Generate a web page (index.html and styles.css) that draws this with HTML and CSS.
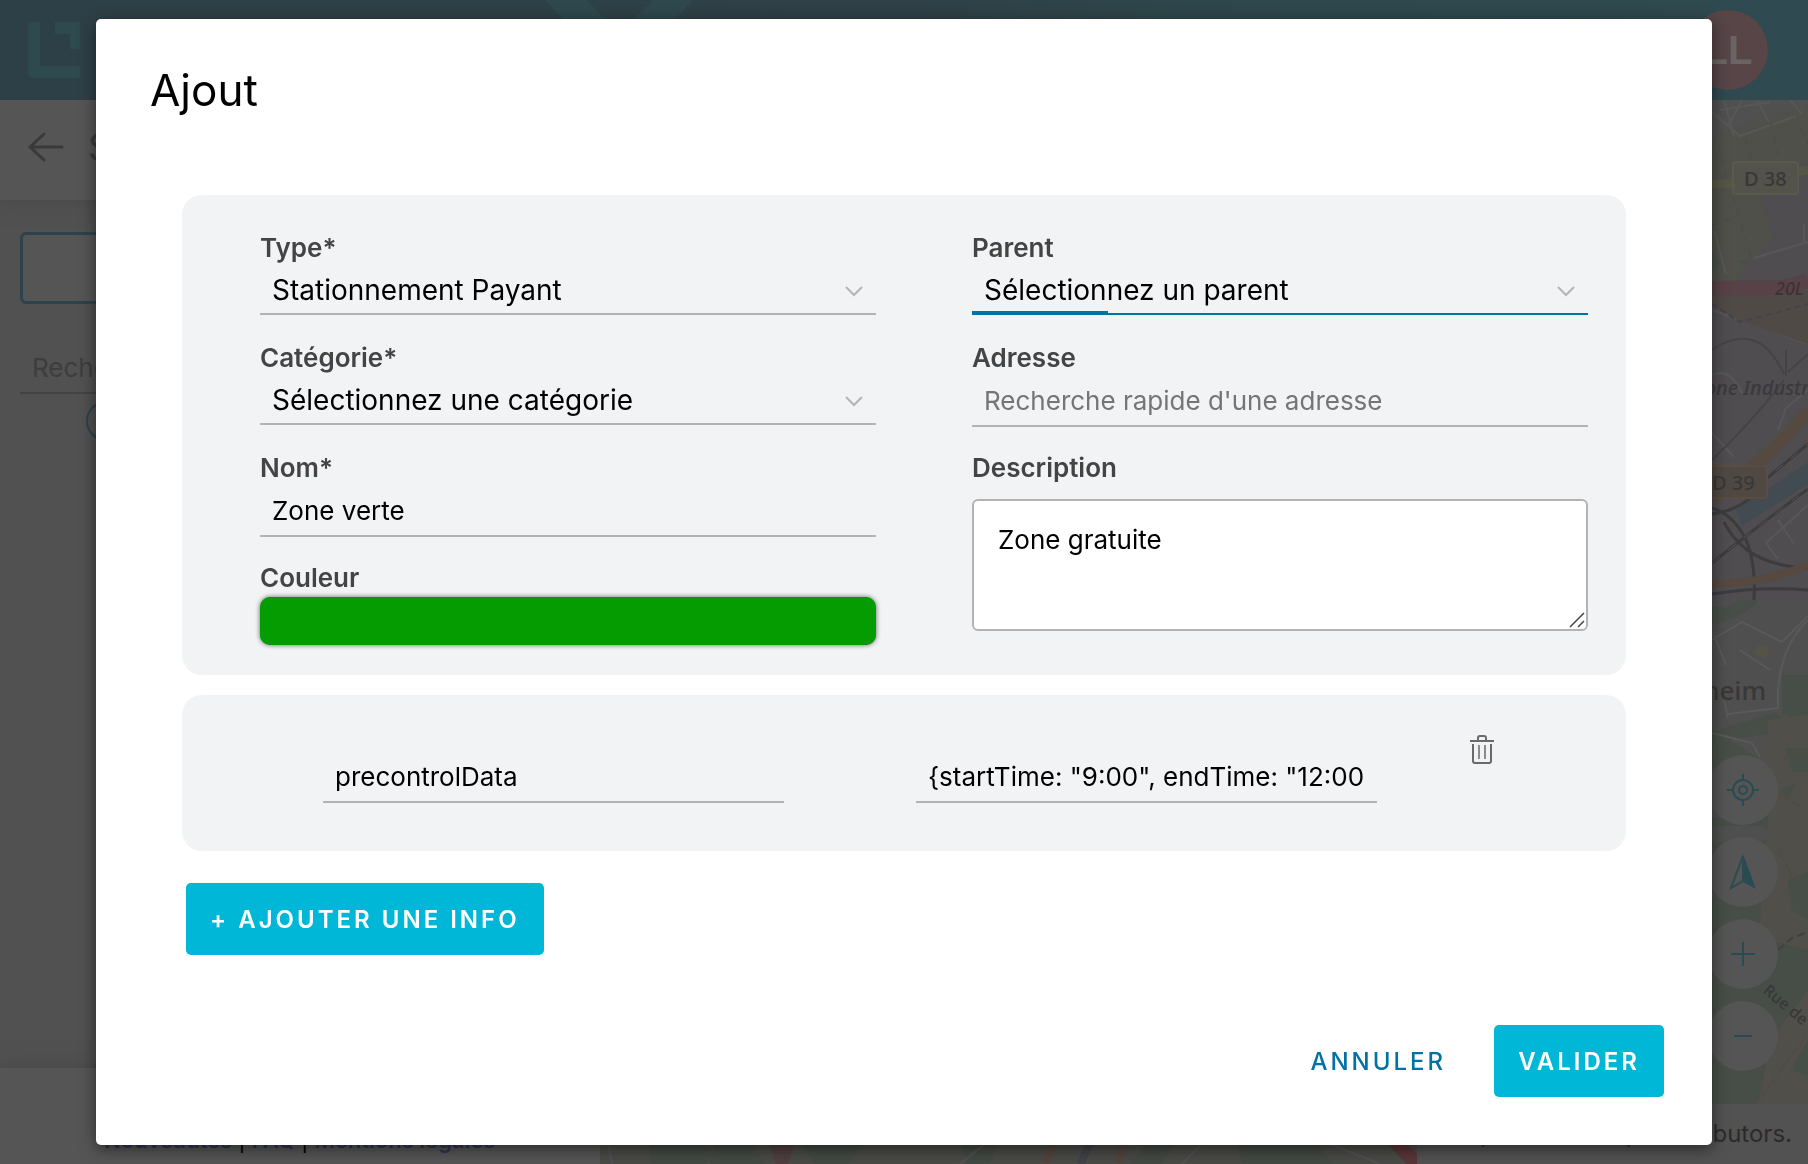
FILE: index.html
```html
<!DOCTYPE html>
<html lang="fr">
<head>
<meta charset="utf-8">
<title>Ajout</title>
<link rel="stylesheet" href="styles.css">
</head>
<body>
<div class="app">
  <header class="topbar">
    <svg class="logo" width="52" height="56" viewBox="0 0 52 56" aria-hidden="true"><path d="M0 0h12v44h40v12H6q-6 0-6-6zM27 0h25v27h-10V12H27z" fill="#2e4a4f"/></svg>
    <svg class="chevron" width="148" height="100" viewBox="0 0 148 100" aria-hidden="true"><path d="M0 0h42l32 34L108 0h40L74 78z" fill="#2e484d"/></svg>
    <div class="avatar">LL</div>
  </header>
  <div class="workspace">
    <aside class="sidebar">
      <div class="side-head">
        <svg width="36" height="30" viewBox="0 0 36 30" fill="none" stroke="#3a3a3a" stroke-width="3" stroke-linecap="round" stroke-linejoin="round" aria-hidden="true"><path d="M34 15H2M16 2L2 15l14 13"/></svg>
        <span>Secteurs</span>
      </div>
      <div class="side-body">
        <div class="side-box"></div>
        <div class="side-search">Recherche</div>
        <div class="side-chip"></div>
      </div>
      <footer class="side-foot"><a href="#">Nouveautés</a> | <a href="#">FAQ</a> | <a href="#">Mentions légales</a></footer>
    </aside>
    <div class="map">
      <svg class="tiles" viewBox="600 100 1208 1064" preserveAspectRatio="xMaxYMin slice" aria-hidden="true">
        <rect x="600" y="100" width="1208" height="1064" fill="#4f4d50"/>
        <rect x="1600" y="100" width="208" height="50" fill="#505050"/>
        <path d="M1700 141l50-19 58-14v52l-40 16-8 18 12 44-30 30-6 14h-36z" fill="#50504a"/>
        <path d="M1712 250l8 14-8 8zM1738 260l10 0-4 6z" fill="#465047"/>
        <g fill="none" stroke="#575757" stroke-width="2">
          <path d="M1712 112l28 24 56-20M1724 100l10 36M1742 100l-14 26M1757 100l12 22M1790 100l12 14M1720 110l50-8"/>
          <path d="M1714 230l12 44M1754 258l54-16M1804 242v-18M1712 310l96 34M1712 375q18-8 30 18M1712 433l22 24M1808 505l-42 38 12 16M1778 430l8-22 22-18M1778 520l16 24"/>
        </g>
        <g fill="none" stroke="#524541" stroke-width="1" stroke-dasharray="6 8"><path d="M1718 145l9 35M1746 140l6 22M1771 122l8 38M1800 128l8 16M1733 197l18 60M1712 225l24-8"/></g>
        <path d="M1700 184h40l68-14" fill="none" stroke="#565546" stroke-width="9"/>
        <path d="M1700 298l108-8v54l-66-22z" fill="#504a47"/>
        <path d="M1712 304l28 18 68-18" fill="none" stroke="#45424a" stroke-width="2" stroke-dasharray="6 4"/>
        <path d="M1700 288h70q22-1 38-8" fill="none" stroke="#574247" stroke-width="15"/>
        <path d="M1712 350q22-15 40-10t32 34M1788 372l20-18M1784 380q-30 40-72 80M1786 350v26" fill="none" stroke="#444446" stroke-width="2"/>
        <path d="M1712 500q50-36 96-88" fill="none" stroke="#56493f" stroke-width="12"/>
        <path d="M1736 510l72-48v22l-66 42z" fill="#434b52"/>
        <g fill="none" stroke="#3c3c3c" stroke-width="3">
          <path d="M1760 484l48-40M1712 563q50-40 96-74M1712 508q20 6 32 28t10 64M1712 514q30-4 46-24M1724 522q22 44 84 46"/>
          <path d="M1712 594q50-8 96-4"/>
        </g>
        <path d="M1700 584q70 0 108-20" fill="none" stroke="#56493f" stroke-width="8"/>
        <path d="M1760 484l48-40M1712 563q50-40 96-74" fill="none" stroke="#555" stroke-width="1" stroke-dasharray="10 10"/>
        <rect x="1600" y="600" width="208" height="220" fill="#4f4f4f"/>
        <path d="M1712 606l14 2 14-8h18q-12 18-46 24zM1782 675h26v50l-26-12zM1712 732l64-20 14 18-60 10 28 18-46 10z" fill="#474e47"/>
        <path d="M1768 720l40-6v120h-60l20-50z" fill="#504f49"/>
        <path d="M1758 644l12 4-4 10-12-4z" fill="#535346"/>
        <path d="M1712 640l30-18 40 20 26-26M1714 635l12 30M1740 650l30 20M1808 620q-32 30-30 88l-50 6M1712 733l40 10 8 14M1724 700l4 18" fill="none" stroke="#595959" stroke-width="2"/>
        <path d="M1600 826l148-10 60-20v368h-208z" fill="#474e47"/>
        <path d="M1770 790l38-4v164l-32-8-30 40-10-20 24-40zM1770 1040l38-50v50l-20 36-28 20zM1764 1090l20-22 24 8v28h-52z" fill="#504f49"/>
        <path d="M1712 826h50l10 6-10 10h-50z" fill="#4f4f4f"/>
        <path d="M1786 748h22v24h-16zM1788 880l20-8v48l-16-10zM1780 790l16-6-8 14z" fill="#474e47"/>
        <path d="M1756 1104l50-68M1776 792l24 14M1778 850l16 30M1782 760l26-10" fill="none" stroke="#54493f" stroke-width="1"/>
        <path d="M1778 950l14-12 16-6" fill="none" stroke="#404040" stroke-width="2" stroke-dasharray="8 4"/>
        <g>
          <path d="M600 1140h820v24H600z" fill="#4a4a47"/>
          <path d="M650 1140h50l14 12-8 12h-56zM716 1140h34l14 24h-54zM800 1140h64l-16 24h-34zM962 1140h36l-8 24h-24zM1150 1140h26l-14 24h-32zM1236 1140h80l16 24h-90z" fill="#434943"/>
          <path d="M768 1140h28l-8 24h-12z" fill="#503f40"/>
          <path d="M1056 1140l-12 24M1124 1140l-6 24" stroke="#51463d" stroke-width="9"/>
          <path d="M1092 1140l-12 24" stroke="#3f4249" stroke-width="8"/>
          <path d="M608 1140l4 24M960 1164l30-24M1182 1164l24-24M1320 1140l60 24" stroke="#525055" stroke-width="2"/>
          <path d="M1386 1132l34 36" stroke="#593538" stroke-width="14"/>
        </g>
        <rect x="1733" y="162" width="65" height="32" rx="3" fill="#53524b" stroke="#5a594e" stroke-width="2"/>
        <rect x="1700" y="466" width="67" height="32" rx="3" fill="#504842" stroke="#574d44" stroke-width="2"/>
        <g font-family="Noto Sans, sans-serif" font-weight="500" fill="#383838">
          <text x="1744" y="186" font-size="20">D 38</text>
          <text x="1712" y="490" font-size="20">D 39</text>
          <text x="1775" y="295" font-size="18" font-style="italic" fill="#3f3236">20L</text>
          <text x="1694" y="395" font-size="20" font-style="italic" fill="#3b393d">Zone Industrielle</text>
          <text x="1766" y="700" font-size="26" text-anchor="end">Eckbolsheim</text>
          <text x="1762" y="992" font-size="16" transform="rotate(40 1762 992)">Rue de</text>
        </g>
      </svg>
      <div class="map-tools">
        <button type="button" aria-label="Me localiser"><svg width="32" height="32" viewBox="0 0 32 32" fill="none" stroke="#2b4b52" stroke-width="2"><circle cx="16" cy="16" r="10"/><circle cx="16" cy="16" r="4"/><path d="M16 0v6M16 26v6M0 16h6M26 16h6"/></svg></button>
        <button type="button" aria-label="Nord"><svg width="28" height="36" viewBox="0 0 28 36"><path d="M14 2L2 34l12-7z" fill="none" stroke="#2b4b52" stroke-width="2"/><path d="M14 0l13 35-13-7z" fill="#2b4b52"/></svg></button>
        <button type="button" aria-label="Zoom avant"><svg width="26" height="26" viewBox="0 0 26 26" stroke="#2b4b52" stroke-width="2"><path d="M13 1v24M1 13h24"/></svg></button>
        <button type="button" aria-label="Zoom arrière"><svg width="26" height="26" viewBox="0 0 26 26" stroke="#2b4b52" stroke-width="2"><path d="M4 13h18"/></svg></button>
      </div>
      <div class="attribution">© OpenStreetMap contributors.</div>
    </div>
  </div>
</div>

<div class="overlay">
  <form class="dialog" role="dialog" aria-labelledby="dialog-title">
    <h1 id="dialog-title">Ajout</h1>
    <div class="content">
      <section class="panel fields">
        <div class="field">
          <label for="type">Type*</label>
          <div class="select">
            <select id="type"><option>Stationnement Payant</option></select>
            <svg width="18" height="12" viewBox="0 0 18 12"><path d="M1 1l8 8 8-8"/></svg>
          </div>
        </div>
        <div class="field">
          <label for="parent">Parent</label>
          <div class="select active">
            <select id="parent"><option>Sélectionnez un parent</option></select>
            <svg width="18" height="12" viewBox="0 0 18 12"><path d="M1 1l8 8 8-8"/></svg>
          </div>
        </div>
        <div class="field">
          <label for="categorie">Catégorie*</label>
          <div class="select">
            <select id="categorie"><option>Sélectionnez une catégorie</option></select>
            <svg width="18" height="12" viewBox="0 0 18 12"><path d="M1 1l8 8 8-8"/></svg>
          </div>
        </div>
        <div class="field">
          <label for="adresse">Adresse</label>
          <input class="line-input" id="adresse" type="text" placeholder="Recherche rapide d'une adresse">
        </div>
        <div class="field">
          <label for="nom">Nom*</label>
          <input class="line-input" id="nom" type="text" value="Zone verte">
        </div>
        <div class="field tall">
          <label for="description">Description</label>
          <div class="area">
            <textarea id="description">Zone gratuite</textarea>
            <svg width="16" height="16" viewBox="0 0 16 16" aria-hidden="true"><path d="M1 15L15 1M9 15l6-6"/></svg>
          </div>
        </div>
        <div class="field">
          <label for="couleur">Couleur</label>
          <input class="swatch" id="couleur" type="color" value="#049c00">
        </div>
      </section>
      <section class="panel info">
        <input class="line-input" type="text" aria-label="Nom de l'info" value="precontrolData">
        <input class="line-input" type="text" aria-label="Valeur de l'info" value='{startTime: "9:00", endTime: "12:00'>
        <button class="trash" type="button" aria-label="Supprimer">
          <svg width="24" height="30" viewBox="0 0 24 30" fill="none" stroke="#6a6a6a" stroke-width="2"><path d="M0 6h24"/><path d="M8 5V3q0-2 2-2h4q2 0 2 2v2M3 9v17q0 2 2 2h14q2 0 2-2V9"/><path d="M9 10v14M15 10v14" stroke-width="1.5"/></svg>
        </button>
      </section>
      <button class="btn primary add" type="button">+ AJOUTER UNE INFO</button>
    </div>
    <div class="actions">
      <button class="btn flat" type="button">ANNULER</button>
      <button class="btn primary" type="submit">VALIDER</button>
    </div>
  </form>
</div>
</body>
</html>
```
FILE: styles.css
```css
* { box-sizing: border-box; }

body {
  margin: 0;
  font-family: Inter, "Liberation Sans", sans-serif;
  font-size: 26px;
  color: #000;
}

button, input, select, textarea { font: inherit; color: inherit; }

/* Dimmed application behind the dialog */
.app {
  display: flex;
  flex-direction: column;
  height: 100vh;
  overflow: hidden;
}

.topbar {
  position: relative;
  display: flex;
  align-items: center;
  justify-content: space-between;
  flex: none;
  height: 100px;
  padding: 0 40px 0 28px;
  background: linear-gradient(90deg, #2e4047 0%, #2f4047 50%, #2e474c 66%, #2f4a50 100%);
}

.chevron { position: absolute; left: 545px; top: 0; }

.avatar {
  width: 80px;
  height: 80px;
  border-radius: 50%;
  background: #574548;
  color: #6b6465;
  font: bold 40px/80px "Liberation Sans", sans-serif;
  text-align: center;
}

.workspace { display: flex; flex: 1; min-height: 0; }

.sidebar {
  display: flex;
  flex-direction: column;
  flex: none;
  width: 600px;
  background: #515151;
}

.side-head {
  display: flex;
  align-items: center;
  gap: 24px;
  height: 100px;
  padding: 0 28px 6px;
  background: #555;
  box-shadow: 0 4px 16px #4a4a4a;
  color: #3a3a3a;
  font-size: 38px;
}

.side-body { flex: 1; padding: 32px 20px; }

.side-box {
  height: 72px;
  border: 3px solid #2d424c;
  border-radius: 6px;
  background: #555;
}

.side-search {
  margin-top: 42px;
  height: 48px;
  padding-left: 12px;
  border-bottom: 2px solid #434343;
  color: #3d3d3d;
  line-height: 44px;
}

.side-chip {
  width: 200px;
  height: 40px;
  margin: 7px 0 0 66px;
  border: 2px solid #2d424c;
  border-radius: 20px;
}

.side-foot {
  height: 96px;
  padding: 60px 0 0 104px;
  background: #555;
  box-shadow: 0 -4px 16px #4a4a4a;
  font-size: 22px;
  line-height: 24px;
}

.side-foot a { color: #2f3450; font-weight: 600; text-decoration: none; }

.map { position: relative; flex: 1; overflow: hidden; }

.tiles { display: block; width: 100%; height: 100%; }

.map-tools {
  position: absolute;
  right: 30px;
  bottom: 93px;
  display: grid;
  gap: 12px;
}

.map-tools button {
  display: grid;
  place-items: center;
  width: 70px;
  height: 70px;
  padding: 0;
  border: 0;
  border-radius: 50%;
  background: #555;
}

.attribution {
  position: absolute;
  right: 0;
  bottom: 0;
  height: 60px;
  padding: 0 16px;
  background: #535252;
  color: #2b2b2b;
  font-size: 24px;
  line-height: 60px;
}

/* Dialog */
.overlay {
  position: fixed;
  inset: 0;
  display: flex;
  align-items: center;
  padding: 0 96px;
}

.dialog {
  flex: 1;
  padding: 40px 48px 48px;
  border-radius: 5px;
  background: #fff;
  box-shadow: 0 4px 16px rgba(0, 0, 0, .5);
}

h1 {
  margin: 0 0 74px;
  padding-left: 6px;
  font-size: 44px;
  font-weight: 400;
  line-height: 62px;
}

.content { padding: 0 38px; }

.panel { border-radius: 20px; background: #f1f3f5; }

.fields {
  display: grid;
  grid-template-columns: 1fr 1fr;
  grid-auto-rows: minmax(84px, auto);
  gap: 26px 96px;
  padding: 38px 38px 28px 78px;
}

.field { display: flex; flex-direction: column; }
.tall { grid-row: span 2; }

label {
  color: #444;
  font-weight: 600;
  line-height: 30px;
}

.select { position: relative; }

.select select {
  display: block;
  width: 100%;
  height: 52px;
  padding: 4px 40px 0 12px;
  border: 0;
  border-bottom: 2px solid #b3b3b3;
  border-radius: 0;
  outline: 0;
  appearance: none;
  background: none;
  font-size: 28px;
}

.select svg {
  position: absolute;
  right: 13px;
  top: 23px;
  fill: none;
  stroke: #b3b3b3;
  stroke-width: 2;
  pointer-events: none;
}

.active select { border-color: #0072a3; }

.active::after {
  content: "";
  position: absolute;
  left: 0;
  bottom: 0;
  width: 136px;
  height: 4px;
  background: #0072a3;
}

.line-input {
  width: 100%;
  height: 54px;
  padding: 2px 12px 0;
  border: 0;
  border-bottom: 2px solid #b3b3b3;
  outline: 0;
  background: none;
}

.line-input::placeholder { color: #757575; opacity: 1; }

.area { position: relative; margin-top: 16px; }

textarea {
  display: block;
  width: 100%;
  height: 132px;
  padding: 22px 24px;
  border: 2px solid #b3b3b3;
  border-radius: 6px;
  outline: 0;
  background: #fff;
  line-height: 34px;
}

textarea::-webkit-resizer { background: transparent; }

.area svg {
  position: absolute;
  right: 3px;
  bottom: 3px;
  fill: none;
  stroke: #444;
  stroke-width: 1.5;
  pointer-events: none;
}

.swatch {
  width: 100%;
  height: 48px;
  margin-top: 4px;
  padding: 0;
  border: 0;
  border-radius: 10px;
  background: #049c00;
  box-shadow: 0 0 5px rgba(0, 0, 0, .6);
}

.swatch::-webkit-color-swatch-wrapper { padding: 0; }
.swatch::-webkit-color-swatch { border: 0; border-radius: 10px; }

.info {
  display: flex;
  margin-top: 20px;
  padding: 40px 132px 48px 141px;
}

.info .line-input { flex: 1; min-width: 0; margin-top: 14px; }
.info .line-input + .line-input { margin-left: 132px; }

.trash {
  display: flex;
  align-self: flex-start;
  margin-left: 93px;
  padding: 0;
  border: 0;
  background: none;
}

.btn {
  height: 72px;
  padding: 0 24px;
  border: 0;
  border-radius: 5px;
  font-size: 24px;
  font-weight: 600;
  letter-spacing: 3px;
}

.primary { background: #00b7d8; color: #fff; }
.flat { background: none; color: #0072a3; font-weight: 500; }
.add { margin: 32px 0 0 4px; }

.actions {
  display: flex;
  justify-content: flex-end;
  gap: 24px;
  margin-top: 70px;
}
```
